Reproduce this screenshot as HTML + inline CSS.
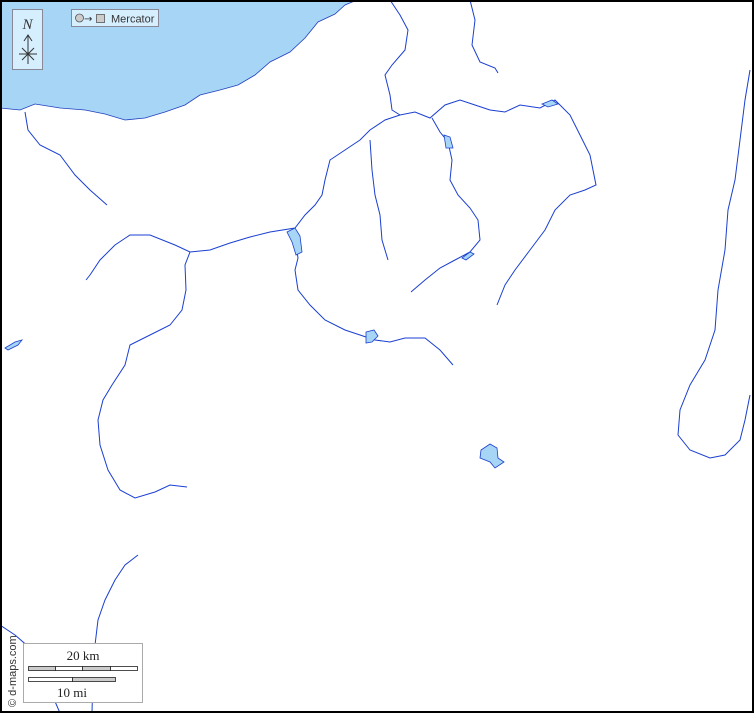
<!DOCTYPE html>
<html><head><meta charset="utf-8"><style>
html,body{margin:0;padding:0;background:#fff}
svg{display:block}
</style></head><body>
<svg width="754" height="713" viewBox="0 0 754 713" xmlns="http://www.w3.org/2000/svg">
<rect x="0" y="0" width="754" height="713" fill="#fff"/>
<path d="M0,0 L357,0 L345,5 L335,14 L318,22 L305,38 L290,52 L270,62 L255,75 L238,85 L220,90 L200,95 L185,105 L165,112 L145,118 L125,120 L105,114 L85,110 L60,108 L35,104 L20,110 L0,108 Z" fill="#a6d5f5" stroke="#2040c0" stroke-width="0.8"/>
<g fill="none" stroke="#1a3fd0" stroke-width="1">
<path d="M25,112 L28,130 L40,145 L60,155 L75,175 L90,190 L107,205"/>
<path d="M390,0 L400,15 L408,30 L405,50 L392,65 L385,75 L390,95 L392,110 L400,115 L415,112 L430,118 L445,105 L460,100 L475,105 L490,110 L505,112 L520,105 L540,108 L555,100 L570,115 L580,135 L590,155 L596,185 L585,190 L570,195 L555,210 L545,230 L530,250 L515,270 L505,285 L497,305"/>
<path d="M470,0 L475,20 L472,45 L480,62 L495,68 L498,73"/>
<path d="M400,115 L385,120 L370,130 L360,140 L345,150 L330,160 L325,180 L322,195 L315,205 L305,215 L295,228 L270,232 L250,237 L230,243 L210,250 L190,252 L175,245 L150,235 L130,235 L115,245 L100,260 L90,275 L86,280"/>
<path d="M370,140 L372,170 L375,195 L380,215 L382,240 L388,260"/>
<path d="M432,118 L440,132 L448,142 L452,160 L450,180 L458,195 L470,208 L478,220 L480,240 L470,252 L455,260 L440,268 L425,280 L411,292"/>
<path d="M190,252 L185,265 L186,290 L182,310 L170,325 L150,335 L130,345 L125,365 L112,385 L103,400 L98,420 L100,445 L108,470 L120,490 L135,498 L155,492 L170,485 L187,487"/>
<path d="M295,238 L298,258 L295,270 L298,290 L310,305 L325,320 L345,330 L360,335 L375,340 L390,342 L405,338 L425,338 L440,350 L453,365"/>
<path d="M750,70 L745,100 L740,140 L735,180 L728,210 L725,250 L718,290 L715,330 L705,360 L690,385 L680,410 L678,435 L690,450 L710,458 L725,455 L740,440 L745,420 L750,395"/>
<path d="M138,555 L125,565 L115,580 L105,600 L98,620 L95,645 L93,670 L92,713"/>
<path d="M0,625 L15,635 L30,648 L40,665 L50,690 L60,713"/>
</g>
<g fill="#a6d5f5" stroke="#1a3fd0" stroke-width="0.8">
<path d="M287,232 L295,228 L300,236 L302,252 L296,255 L292,242 Z"/>
<path d="M366,332 L374,330 L378,336 L372,342 L366,343 Z"/>
<path d="M444,135 L450,137 L453,148 L446,148 Z"/>
<path d="M481,450 L490,444 L497,448 L498,458 L504,462 L495,468 L490,462 L480,458 Z"/>
<path d="M5,348 L15,342 L22,340 L18,345 L8,350 Z"/>
<path d="M542,104 L552,100 L558,104 L548,107 Z"/>
<path d="M462,258 L470,252 L474,254 L466,260 Z"/>
</g>
<rect x="12.5" y="9.5" width="30" height="60" fill="#d6efff" stroke="#889" stroke-width="1"/>
<text x="27.5" y="29" font-family="Liberation Serif,serif" font-style="italic" font-size="15" text-anchor="middle" fill="#333">N</text>
<g stroke="#333" stroke-width="1" fill="none">
<path d="M28,36 L28,64 M24,41 L28,35 L32,41 M19,54 L37,54 M22,48 L34,60 M34,48 L22,60"/>
</g>
<rect x="71.5" y="9.5" width="87" height="17" fill="#d6efff" stroke="#889" stroke-width="1"/>
<circle cx="79.5" cy="18" r="4" fill="#ccc" stroke="#555" stroke-width="0.8"/>
<text x="84" y="22" font-family="DejaVu Sans,sans-serif" font-size="10" fill="#333">→</text>
<rect x="96.5" y="14.5" width="8" height="8" fill="#ccc" stroke="#555" stroke-width="0.8"/>
<text x="111" y="22.5" font-family="Liberation Sans,sans-serif" font-size="11" fill="#333">Mercator</text>
<rect x="23.5" y="643.5" width="119" height="59" fill="#fff" stroke="#aaa" stroke-width="1"/>
<text x="83" y="660" font-family="Liberation Serif,serif" font-size="13" text-anchor="middle" fill="#222">20 km</text>
<g stroke="#222" stroke-width="0.8">
<rect x="28.5" y="666.5" width="27" height="4" fill="#ccc"/>
<rect x="55.5" y="666.5" width="27" height="4" fill="#fff"/>
<rect x="82.5" y="666.5" width="28" height="4" fill="#ccc"/>
<rect x="110.5" y="666.5" width="27" height="4" fill="#fff"/>
<rect x="28.5" y="677.5" width="44" height="4" fill="#fff"/>
<rect x="72.5" y="677.5" width="43" height="4" fill="#ccc"/>
</g>
<text x="72" y="697" font-family="Liberation Serif,serif" font-size="13" text-anchor="middle" fill="#222">10 mi</text>
<text transform="translate(16,707) rotate(-90)" font-family="Liberation Sans,sans-serif" font-size="11" fill="#333">© d-maps.com</text>
<rect x="1" y="1" width="752" height="711" fill="none" stroke="#000" stroke-width="2"/>
</svg>
</body></html>
